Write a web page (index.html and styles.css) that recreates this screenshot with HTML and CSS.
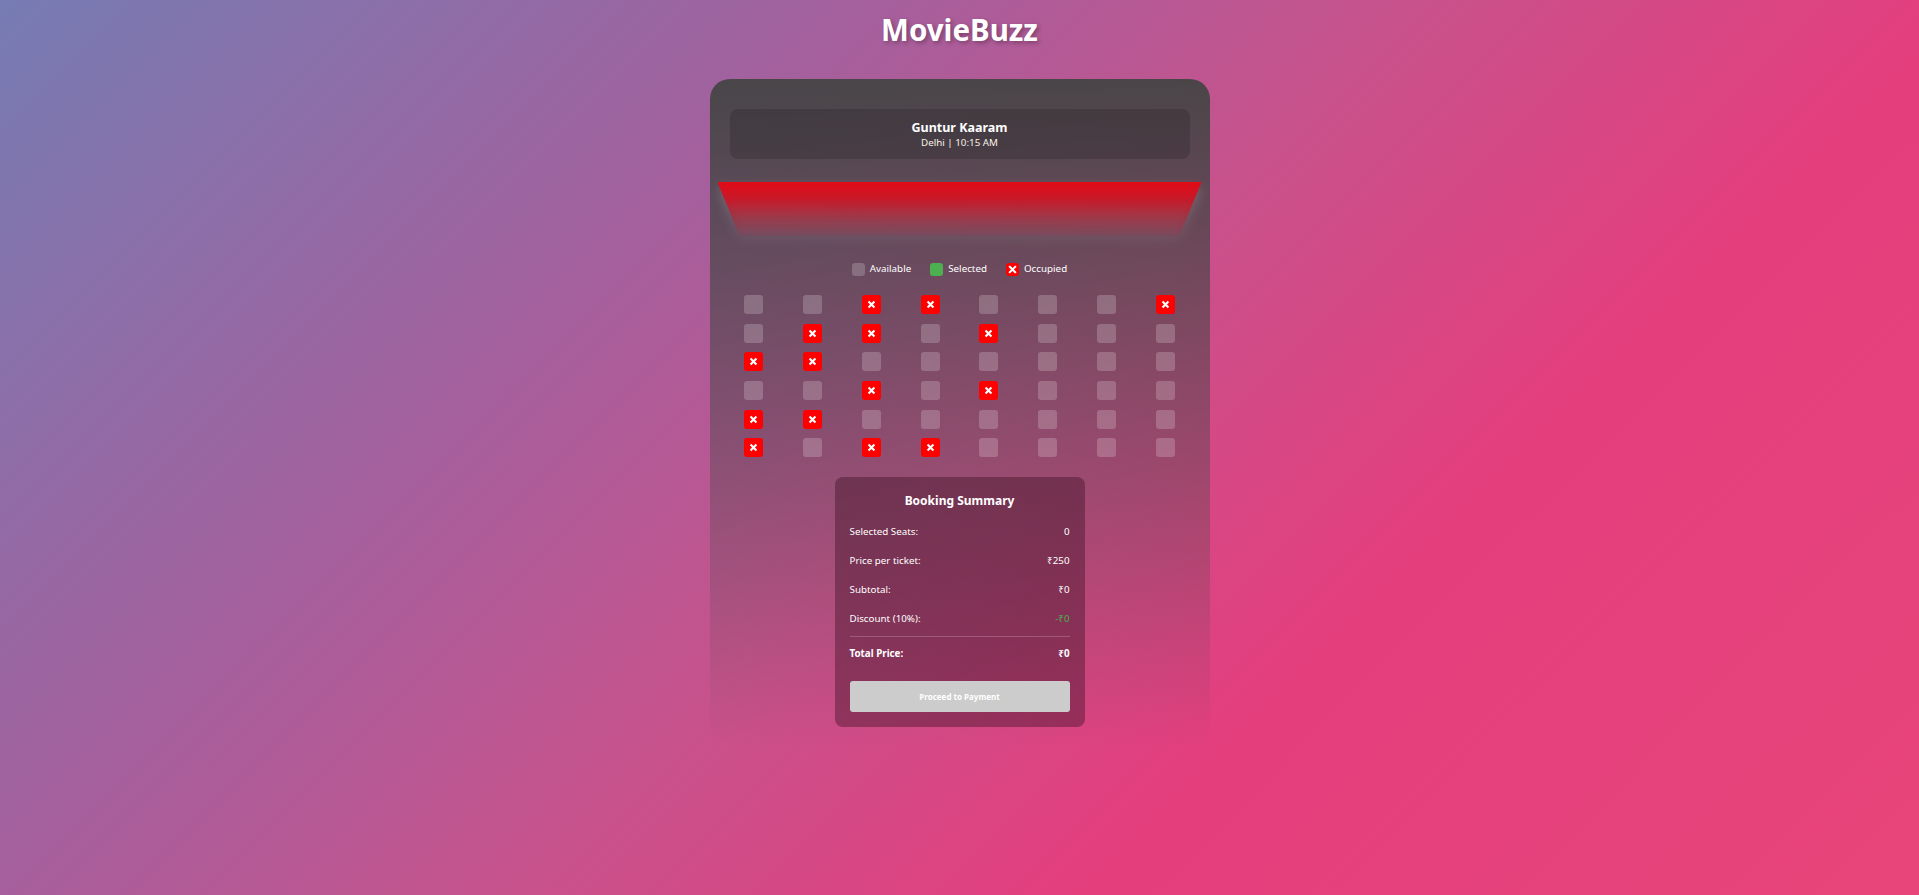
FILE: index.html
```html
<!DOCTYPE html>
<html lang="en">
<head>
<meta charset="utf-8">
<title>MovieBuzz</title>
<link rel="stylesheet" href="styles.css">
</head>
<body>
<header class="site-header">
  <h1 class="brand">MovieBuzz</h1>
</header>
<main class="booking-card">
  <section class="movie-info">
    <div class="movie-title">Guntur Kaaram</div>
    <div class="movie-meta">Delhi | 10:15 AM</div>
  </section>

  <div class="screen-wrap"><div class="screen"></div></div>

  <ul class="legend">
    <li class="legend-item"><span class="seat-mini available"></span>Available</li>
    <li class="legend-item"><span class="seat-mini selected"></span>Selected</li>
    <li class="legend-item"><span class="seat-mini occupied"><svg viewBox="0 0 10 10"><path d="M2.6 2.6 7.4 7.4M7.4 2.6 2.6 7.4"/></svg></span>Occupied</li>
  </ul>

  <div class="seat-grid">
    <span class="seat"></span><span class="seat"></span><span class="seat occupied"><svg viewBox="0 0 10 10"><path d="M3 3 7 7M7 3 3 7"/></svg></span><span class="seat occupied"><svg viewBox="0 0 10 10"><path d="M3 3 7 7M7 3 3 7"/></svg></span><span class="seat"></span><span class="seat"></span><span class="seat"></span><span class="seat occupied"><svg viewBox="0 0 10 10"><path d="M3 3 7 7M7 3 3 7"/></svg></span>
    <span class="seat"></span><span class="seat occupied"><svg viewBox="0 0 10 10"><path d="M3 3 7 7M7 3 3 7"/></svg></span><span class="seat occupied"><svg viewBox="0 0 10 10"><path d="M3 3 7 7M7 3 3 7"/></svg></span><span class="seat"></span><span class="seat occupied"><svg viewBox="0 0 10 10"><path d="M3 3 7 7M7 3 3 7"/></svg></span><span class="seat"></span><span class="seat"></span><span class="seat"></span>
    <span class="seat occupied"><svg viewBox="0 0 10 10"><path d="M3 3 7 7M7 3 3 7"/></svg></span><span class="seat occupied"><svg viewBox="0 0 10 10"><path d="M3 3 7 7M7 3 3 7"/></svg></span><span class="seat"></span><span class="seat"></span><span class="seat"></span><span class="seat"></span><span class="seat"></span><span class="seat"></span>
    <span class="seat"></span><span class="seat"></span><span class="seat occupied"><svg viewBox="0 0 10 10"><path d="M3 3 7 7M7 3 3 7"/></svg></span><span class="seat"></span><span class="seat occupied"><svg viewBox="0 0 10 10"><path d="M3 3 7 7M7 3 3 7"/></svg></span><span class="seat"></span><span class="seat"></span><span class="seat"></span>
    <span class="seat occupied"><svg viewBox="0 0 10 10"><path d="M3 3 7 7M7 3 3 7"/></svg></span><span class="seat occupied"><svg viewBox="0 0 10 10"><path d="M3 3 7 7M7 3 3 7"/></svg></span><span class="seat"></span><span class="seat"></span><span class="seat"></span><span class="seat"></span><span class="seat"></span><span class="seat"></span>
    <span class="seat occupied"><svg viewBox="0 0 10 10"><path d="M3 3 7 7M7 3 3 7"/></svg></span><span class="seat"></span><span class="seat occupied"><svg viewBox="0 0 10 10"><path d="M3 3 7 7M7 3 3 7"/></svg></span><span class="seat occupied"><svg viewBox="0 0 10 10"><path d="M3 3 7 7M7 3 3 7"/></svg></span><span class="seat"></span><span class="seat"></span><span class="seat"></span><span class="seat"></span>
  </div>

  <section class="summary">
    <h2 class="summary-title">Booking Summary</h2>
    <div class="summary-row"><span>Selected Seats:</span><span>0</span></div>
    <div class="summary-row"><span>Price per ticket:</span><span>₹250</span></div>
    <div class="summary-row"><span>Subtotal:</span><span>₹0</span></div>
    <div class="summary-row"><span>Discount (10%):</span><span class="discount">-₹0</span></div>
    <div class="summary-divider"></div>
    <div class="summary-row total"><span>Total Price:</span><span>₹0</span></div>
    <button class="pay-btn" type="button" disabled>Proceed to Payment</button>
  </section>
</main>
</body>
</html>
```
FILE: styles.css
```css
* { box-sizing: border-box; }

html, body { height: 100%; }

body {
  margin: 0;
  min-height: 895px;
  font-family: "Segoe UI", "Noto Sans", "Open Sans", sans-serif;
  color: #fff;
  background: linear-gradient(135deg, #767cb3 0%, #a65f9c 32%, #c7528c 50%, #e43e7d 70%, #e8457a 100%);
  background-attachment: fixed;
  overflow: hidden;
}

.site-header {
  padding-top: 10px;
  text-align: center;
}

.brand {
  margin: 0;
  font-size: 29.5px;
  line-height: 40px;
  font-weight: 700;
  text-shadow: 2px 2px 4px rgba(0, 0, 0, 0.3);
}

.booking-card {
  width: 500px;
  margin: 29px auto 0;
  padding: 30px 20px 20px;
  border-radius: 20px;
  background: linear-gradient(to bottom, rgba(68, 68, 68, 0.95) 0%, rgba(68, 68, 68, 0.5) 45%, rgba(68, 68, 68, 0) 100%);
}

.movie-info {
  height: 50px;
  padding-top: 10px;
  border-radius: 8px;
  background: rgba(0, 0, 0, 0.15);
  text-align: center;
}

.movie-title {
  font-size: 12.5px;
  font-weight: 700;
  line-height: 17px;
}

.movie-meta {
  font-size: 9.8px;
  line-height: 14px;
  color: #f8f2e6;
}

.screen-wrap {
  margin: 23px -12px 0;
  filter: drop-shadow(0 5px 6px rgba(255, 255, 255, 0.16));
}

.screen {
  height: 54px;
  background: linear-gradient(to bottom, #e20a16 0%, #c81828 30%, rgba(190, 30, 50, 0.5) 70%, rgba(140, 60, 85, 0.3) 100%);
  clip-path: polygon(0 0, 100% 0, 95.45% 100%, 4.55% 100%);
}

.legend {
  list-style: none;
  margin: 26px 0 0;
  padding: 0;
  display: flex;
  justify-content: center;
  gap: 19px;
}

.legend-item {
  display: flex;
  align-items: center;
  gap: 5px;
  font-size: 9.8px;
  line-height: 14px;
}

.seat-mini {
  width: 13px;
  height: 13px;
  border-radius: 3px;
  display: flex;
  align-items: center;
  justify-content: center;
}

.seat-mini.available { background: rgba(255, 255, 255, 0.2); }
.seat-mini.selected { background: #4caf50; }
.seat-mini.occupied { background: #ff0000; }

.seat-mini svg { width: 11px; height: 11px; }

svg path {
  fill: none;
  stroke: #fff;
  stroke-width: 1.9;
  stroke-linecap: square;
}

.seat-grid {
  margin-top: 19px;
  display: grid;
  grid-template-columns: repeat(8, 1fr);
  column-gap: 10px;
  row-gap: 9.7px;
  justify-items: center;
}

.seat {
  width: 19px;
  height: 19px;
  border-radius: 3px;
  background: rgba(255, 255, 255, 0.2);
  display: flex;
  align-items: center;
  justify-content: center;
}

.seat.occupied { background: #ff0000; }

.seat svg { width: 11px; height: 11px; }

.summary {
  width: 250px;
  margin: 20px auto 0;
  padding: 15px;
  border-radius: 8px;
  background: rgba(55, 14, 33, 0.4);
}

.summary-title {
  margin: 0 0 7.4px;
  font-size: 12px;
  line-height: 18px;
  font-weight: 700;
  text-align: center;
}

.summary-row {
  display: flex;
  justify-content: space-between;
  font-size: 9.8px;
  line-height: 14px;
  padding: 7.5px 0;
}

.summary-row.total { font-weight: 700; }

.discount { color: #4caf50; }

.summary-divider {
  height: 1px;
  margin: 2px 0 3px;
  background: rgba(255, 255, 255, 0.2);
}

.pay-btn {
  display: block;
  width: 100%;
  height: 31px;
  margin-top: 12.6px;
  border: none;
  border-radius: 3px;
  background: #cccccc;
  color: #fff;
  font-family: inherit;
  font-size: 8px;
  font-weight: 700;
}
```
